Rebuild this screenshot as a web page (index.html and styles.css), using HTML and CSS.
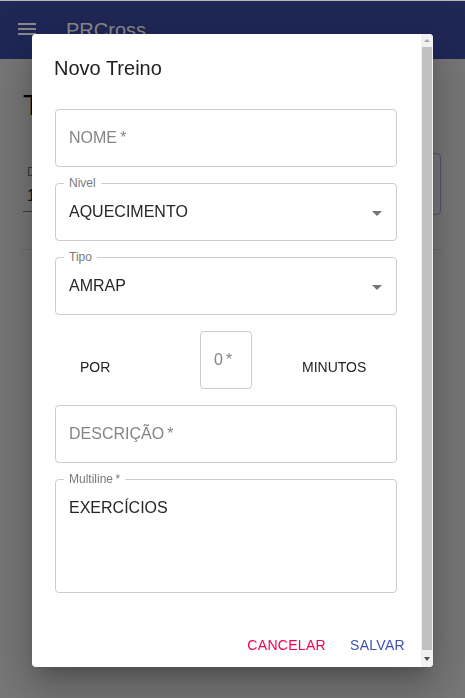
FILE: index.html
```html
<!DOCTYPE html>
<html lang="pt">
<head>
<meta charset="utf-8">
<title>PRCross</title>
<link rel="stylesheet" href="styles.css">
</head>
<body>
<div class="topline"></div>
<header class="appbar">
  <svg class="menu-icon" viewBox="0 0 24 24" width="24" height="24"><path d="M3 18h18v-2H3v2zm0-5h18v-2H3v2zm0-7v2h18V6H3z"/></svg>
  <span class="brand">PRCross</span>
</header>
<main class="page">
  <h1 class="page-title">Treinos</h1>
  <div class="filters">
    <div class="std-field">
      <span class="std-label">Dia</span>
      <span class="std-value">1</span>
    </div>
    <div class="outlined-box"></div>
  </div>
  <hr class="divider">
</main>

<div class="modal">
  <div class="dialog">
    <div class="dialog-main">
      <h2 class="dialog-title">Novo Treino</h2>
      <div class="dialog-content">
        <div class="field">
          <span class="placeholder">NOME&thinsp;*</span>
        </div>
        <div class="field field-select">
          <span class="notch">Nivel</span>
          <span class="value">AQUECIMENTO</span>
          <svg class="arrow" viewBox="0 0 24 24" width="24" height="24"><path d="M7 10l5 5 5-5z"/></svg>
        </div>
        <div class="field field-select">
          <span class="notch">Tipo</span>
          <span class="value">AMRAP</span>
          <svg class="arrow" viewBox="0 0 24 24" width="24" height="24"><path d="M7 10l5 5 5-5z"/></svg>
        </div>
        <div class="time-row">
          <div class="time-cell time-por"><span class="time-text">POR</span></div>
          <div class="field field-small">
            <span class="placeholder">0&thinsp;*</span>
          </div>
          <div class="time-cell time-min"><span class="time-text">MINUTOS</span></div>
        </div>
        <div class="field">
          <span class="placeholder">DESCRIÇÃO&thinsp;*</span>
        </div>
        <div class="field field-multi">
          <span class="notch">Multiline&thinsp;*</span>
          <span class="value">EXERCÍCIOS</span>
        </div>
      </div>
      <div class="dialog-actions">
        <button class="btn btn-secondary">CANCELAR</button>
        <button class="btn btn-primary">SALVAR</button>
      </div>
    </div>
    <div class="scrollbar">
      <div class="sb-button"><span class="sb-arrow-up"></span></div>
      <div class="sb-thumb"></div>
      <div class="sb-button sb-bottom"><span class="sb-arrow-down"></span></div>
    </div>
  </div>
</div>
</body>
</html>
```

FILE: styles.css
```css
html, body {
  margin: 0;
  padding: 0;
}
body {
  width: 465px;
  height: 698px;
  overflow: hidden;
  background: #777777;
  font-family: "Liberation Sans", Arial, sans-serif;
}

.topline {
  height: 1px;
  background: #b9b9b9;
}

.appbar {
  height: 58px;
  background: #1f2757;
  display: flex;
  align-items: flex-start;
  padding: 16px 0 0 15px;
  box-sizing: border-box;
}
.menu-icon {
  fill: #8a8a8a;
  flex: none;
}
.brand {
  margin-left: 27px;
  font-size: 20px;
  line-height: 24px;
  color: #8a8a8a;
  padding-top: 1px;
}

.page {
  padding: 0 24px 0 23px;
}
.page-title {
  margin: 28px 0 0;
  font-size: 30px;
  line-height: 36px;
  font-weight: 400;
  color: #000;
}
.filters {
  margin-top: 30px;
  height: 62px;
  display: flex;
  justify-content: space-between;
}
.std-field {
  width: 40px;
  display: flex;
  flex-direction: column;
  border-bottom: 1px solid #3c3c3c;
  height: 59px;
  box-sizing: border-box;
  padding-left: 4px;
}
.std-label {
  margin-top: 12px;
  font-size: 12px;
  color: #3a3a3a;
}
.std-value {
  margin-top: 8px;
  font-size: 16px;
  color: #111;
}
.outlined-box {
  width: 200px;
  height: 62px;
  box-sizing: border-box;
  border: 1px solid #52566f;
  border-radius: 4px;
}
.divider {
  margin: 34px 0 0;
  border: 0;
  border-top: 1px solid #6b6b6b;
}

/* Modal */
.modal {
  position: fixed;
  inset: 0;
  display: flex;
  justify-content: center;
  align-items: flex-start;
  padding-top: 34px;
}
.dialog {
  width: 401px;
  height: 633px;
  background: #fff;
  border-radius: 4px;
  display: flex;
  overflow: hidden;
  box-shadow: 0 11px 15px -7px rgba(0,0,0,0.2), 0 24px 38px 3px rgba(0,0,0,0.14), 0 9px 46px 8px rgba(0,0,0,0.12);
}
.dialog-main {
  flex: 1;
  display: flex;
  flex-direction: column;
  min-width: 0;
}
.dialog-title {
  margin: 0;
  padding: 18px 24px 0 22px;
  font-size: 20px;
  line-height: 32px;
  font-weight: 400;
  color: #212121;
}
.dialog-content {
  margin-top: 25px;
  padding: 0 24px 0 23px;
  display: flex;
  flex-direction: column;
  gap: 16px;
}

.field {
  position: relative;
  height: 58px;
  box-sizing: border-box;
  border: 1px solid #cdcdcd;
  border-radius: 4px;
  display: flex;
  align-items: center;
  padding: 0 13px;
  font-size: 16px;
}
.placeholder {
  color: #858585;
}
.value {
  color: #262626;
}
.notch {
  position: absolute;
  top: -8px;
  left: 8px;
  padding: 0 5px;
  background: #fff;
  font-size: 12px;
  line-height: 14px;
  color: #7a7a7a;
}
.field-select {
  padding-right: 7px;
}
.arrow {
  margin-left: auto;
  fill: #757575;
  flex: none;
  margin-top: 1px;
}
.field-multi {
  height: 114px;
  align-items: flex-start;
  padding-top: 17.5px;
}
.field-multi .value {
  line-height: 19px;
}

.time-row {
  display: flex;
  align-items: center;
  height: 58px;
}
.time-cell {
  display: flex;
}
.time-por {
  width: 145px;
  padding-left: 25px;
  box-sizing: border-box;
}
.time-min {
  padding-left: 50px;
}
.time-text {
  margin-top: 13px;
  font-size: 14px;
  color: #222;
}
.field-small {
  width: 52px;
  flex: none;
}

.dialog-actions {
  margin-top: 34px;
  padding: 0 8px;
  display: flex;
  justify-content: flex-end;
  gap: 8px;
}
.btn {
  background: none;
  border: 0;
  padding: 6px 8px;
  min-width: 64px;
  font-family: "Liberation Sans", Arial, sans-serif;
  font-size: 14px;
  line-height: 24px;
  letter-spacing: 0.3px;
  cursor: pointer;
}
.btn-secondary {
  color: #f50057;
}
.btn-primary {
  color: #3f51b5;
}

/* Fake scrollbar */
.scrollbar {
  width: 12px;
  flex: none;
  background: #f1f1f1;
  display: flex;
  flex-direction: column;
}
.sb-button {
  height: 13px;
  display: flex;
  justify-content: center;
  align-items: center;
  flex: none;
}
.sb-bottom {
  height: 17px;
}
.sb-arrow-up {
  width: 0;
  height: 0;
  border-left: 3.5px solid transparent;
  border-right: 3.5px solid transparent;
  border-bottom: 3.5px solid #a3a3a3;
}
.sb-arrow-down {
  width: 0;
  height: 0;
  border-left: 3.5px solid transparent;
  border-right: 3.5px solid transparent;
  border-top: 4px solid #505050;
}
.sb-thumb {
  flex: 1;
  margin: 0 1px;
  background: #c1c1c1;
}
```
